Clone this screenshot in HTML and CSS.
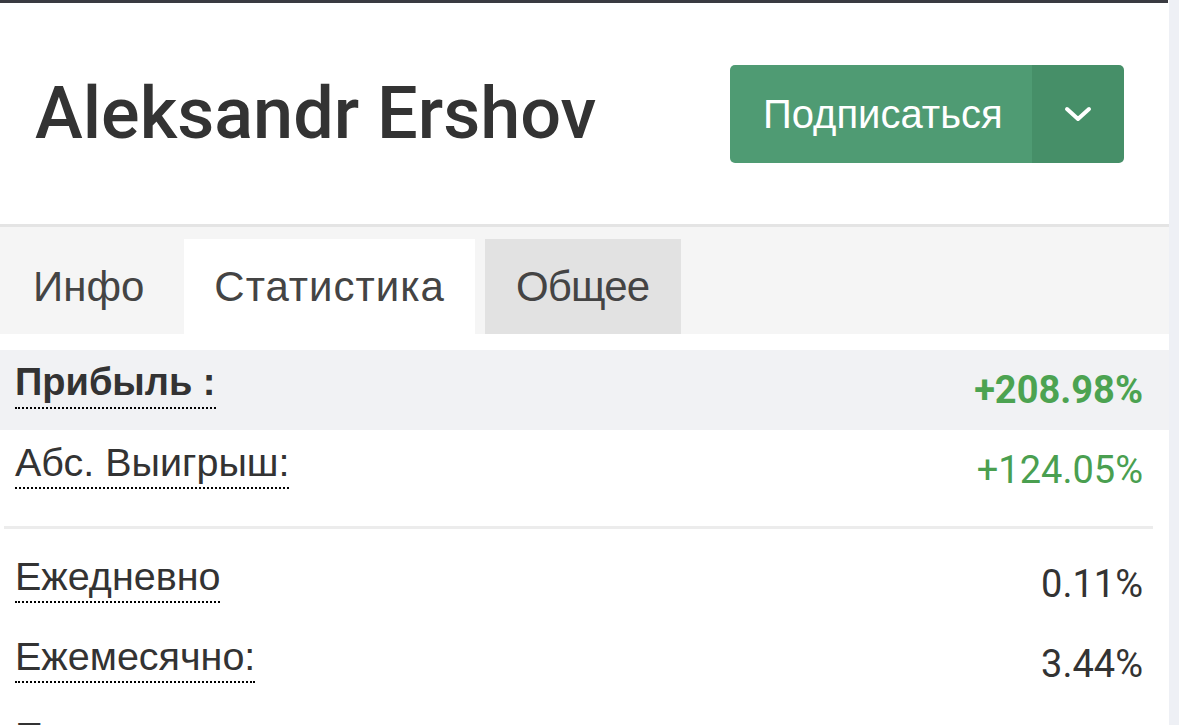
FILE: index.html
```html
<!DOCTYPE html>
<html lang="ru">
<head>
<meta charset="utf-8">
<title>Aleksandr Ershov</title>
<link rel="stylesheet" href="styles.css">
</head>
<body>
<div class="page">
  <div class="topbar"></div>
  <header class="header">
    <h1 class="name">Aleksandr Ershov</h1>
    <div class="subscribe">
      <span class="subscribe-main">Подписаться</span>
      <span class="subscribe-toggle">
        <svg width="28" height="16" viewBox="0 0 28 16"><path d="M3 3 L14 13 L25 3" fill="none" stroke="#fff" stroke-width="4" stroke-linecap="round" stroke-linejoin="round"/></svg>
      </span>
    </div>
  </header>
  <nav class="tabs">
    <span class="tab">Инфо</span>
    <span class="tab tab-active">Статистика</span>
    <span class="tab tab-hover">Общее</span>
  </nav>
  <section class="stats">
    <div class="row row-main">
      <span class="label label-bold">Прибыль :</span>
      <span class="value value-bold">+208.98%</span>
    </div>
    <div class="row">
      <span class="label">Абс. Выигрыш:</span>
      <span class="value value-green">+124.05%</span>
    </div>
    <div class="sep"></div>
    <div class="row">
      <span class="label">Ежедневно</span>
      <span class="value">0.11%</span>
    </div>
    <div class="row">
      <span class="label">Ежемесячно:</span>
      <span class="value">3.44%</span>
    </div>
    <div class="row">
      <span class="label">Просадка:</span>
      <span class="value">78.72%</span>
    </div>
  </section>
</div>
</body>
</html>
```

FILE: styles.css
```css
html, body {
  margin: 0;
  padding: 0;
}
body {
  background: #eef0f5;
  overflow: hidden;
}
.page {
  width: 1169px;
  height: 725px;
  background: #fff;
  overflow: hidden;
}
.topbar {
  height: 3px;
  width: 1168px;
  background: #3a3b41;
}
.header {
  height: 221px;
  display: flex;
  align-items: center;
  justify-content: space-between;
  padding: 0 45px 0 35px;
  border-bottom: 3px solid #e4e4e4;
}
.name {
  margin: 0;
  font-family: Roboto, sans-serif;
  font-weight: 500;
  font-size: 72px;
  color: #333;
}
.subscribe {
  display: flex;
  height: 98px;
  border-radius: 5px;
  overflow: hidden;
  margin-top: 1px;
}
.subscribe-main {
  display: flex;
  align-items: center;
  padding: 0 32px 0 33px;
  width: 237px;
  background: #4f9b73;
  color: #fff;
  font-family: "Liberation Sans", Arial, sans-serif;
  font-size: 40px;
}
.subscribe-toggle {
  display: flex;
  align-items: center;
  justify-content: center;
  width: 92px;
  background: #468f68;
}
.tabs {
  display: flex;
  gap: 10px;
  background: #f5f5f5;
  padding: 12px 0 0 3px;
  height: 95px;
}
.tab {
  display: flex;
  align-items: center;
  padding: 0 30px;
  font-family: "Liberation Sans", Arial, sans-serif;
  font-size: 42px;
  color: #444;
}
.tab-active {
  background: #fff;
  letter-spacing: 1px;
}
.tab-hover {
  background: #e2e2e2;
  padding: 0 32px 0 31px;
  letter-spacing: -0.8px;
}
.stats {
  padding-top: 16px;
}
.row {
  display: flex;
  justify-content: space-between;
  align-items: flex-start;
  height: 80px;
  padding: 7px 26px 0 15px;
  box-sizing: border-box;
}
.row-main {
  background: #f1f2f4;
}
.label {
  font-family: "Liberation Sans", Arial, sans-serif;
  font-size: 39.5px;
  line-height: 50px;
  color: #333;
  border-bottom: 2px dotted #000;
}
.label-bold {
  font-weight: bold;
  font-size: 38px;
}
.value {
  margin-top: 8px;
  font-family: Roboto, sans-serif;
  font-size: 38px;
  line-height: 50px;
  color: #333;
}
.value-bold {
  font-weight: bold;
  color: #4ca351;
}
.value-green {
  color: #4a9f50;
}
.sep {
  height: 3px;
  background: #ececec;
  margin: 16px 16px 15px 4px;
}
```
